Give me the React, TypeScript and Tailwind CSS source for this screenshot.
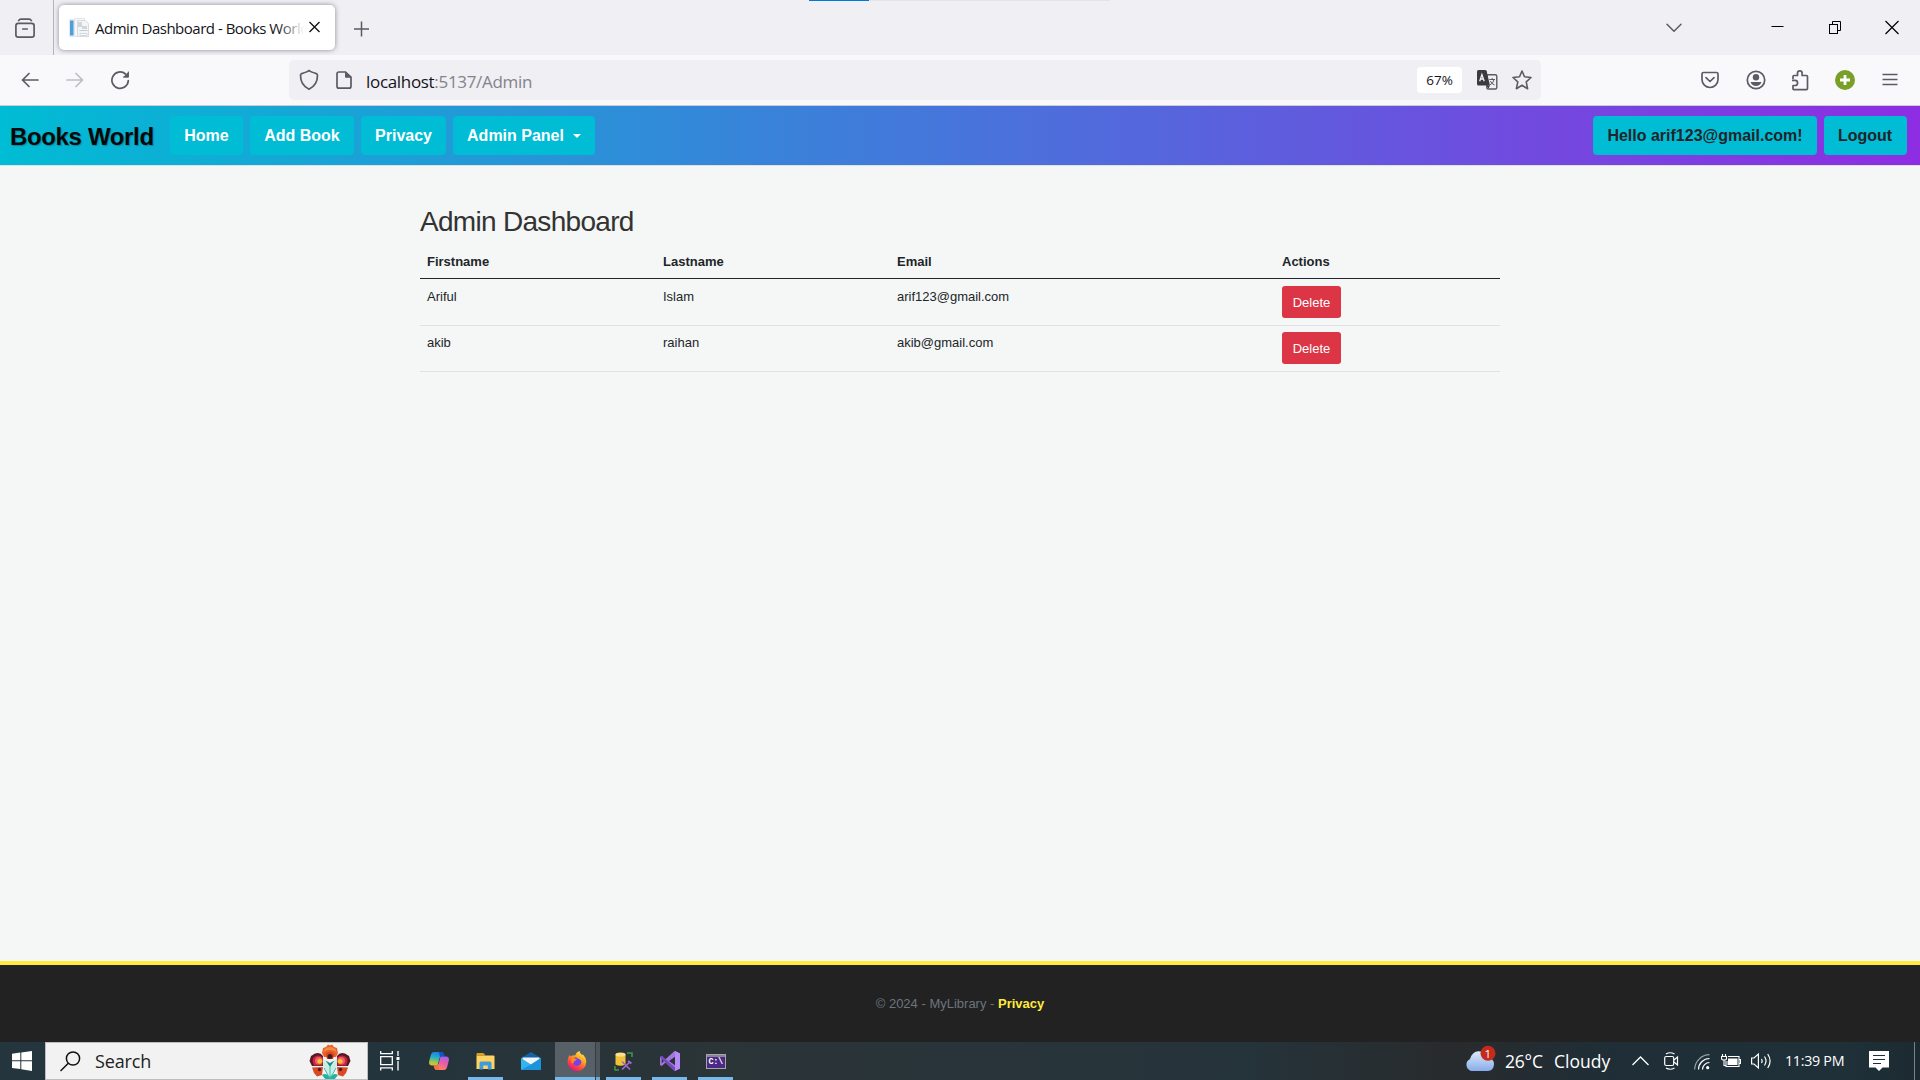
import React from "react";

const ink = "#5b5b66";

/* ---------- Browser chrome ---------- */

function TabBar() {
  return (
    <div className="relative flex h-[55px] bg-[#f0eff4]">
      <div className="absolute left-[809px] top-0 flex h-px w-[301px] bg-[#e4e4e4]">
        <div className="h-px w-[60px] bg-[#0078d7]" />
      </div>
      <div className="flex w-[54px] border-r border-[#b4b4ba]">
        <svg className="ml-[15px] mt-[18px]" width="20" height="21" fill="none" stroke={ink} strokeWidth="1.7" strokeLinecap="round">
          <path d="M3.6 2.6Q4.4 1.2 6 1.2H14Q15.6 1.2 16.4 2.6" />
          <rect x="0.9" y="5.4" width="18.2" height="13.7" rx="2.4" />
          <path d="M7.8 11H12.2" />
        </svg>
      </div>
      <div className="ml-[5px] mt-[5px] flex h-[45px] w-[276px] items-center rounded-[5px] bg-white shadow-[0_0_5px_rgba(70,70,85,0.6)]">
        <svg className="ml-[10px]" width="21" height="20">
          <rect x="1" y="2.500" width="3.500" height="15" fill="#4f9bd6" />
          <path d="M0 1h6v18H0" fill="#5ba5dc" opacity="0.200" />
          <path d="M5.500 0.500h10v18h-10z" fill="#f7f8f9" stroke="#e3e6e9" />
          <path d="M8.500 2.500h8l3 3v13h-11z" fill="#f3f5f6" stroke="#d8dce1" />
          <path d="M9 4h4v5h-4zM13 8h5v3h-5z" fill="#cfd6dc" />
          <path d="M10.500 12.500h8" stroke="#c4cbd2" />
          <path d="M11 15.500h7v2h-7z" fill="#fff" stroke="#d3d8dd" />
        </svg>
        <div className="relative ml-[5px] w-[209px] overflow-hidden whitespace-nowrap font-['Open_Sans','Noto_Sans',sans-serif] text-[15px] leading-[24px] tracking-[-0.490px] text-[#15141a]">
          Admin Dashboard - Books World
          <div className="absolute right-0 top-0 h-full w-[26px] bg-gradient-to-r from-transparent to-white" />
        </div>
        <svg className="ml-[5px] mb-px" width="11" height="12" stroke="#15141a" strokeWidth="1.4">
          <path d="M0.500 1L10.500 11M10.500 1L0.500 11" />
        </svg>
      </div>
      <svg className="ml-[19px] mt-[21px]" width="16" height="16" stroke={ink} strokeWidth="1.5">
        <path d="M7.500 0.500V15.500M0 8H15" />
      </svg>
      <div className="ml-auto flex">
        <svg className="mt-[22px]" width="18" height="12" fill="none" stroke={ink} strokeWidth="1.5" strokeLinecap="round" strokeLinejoin="round">
          <path d="M2 2.300L9 9.300L16 2.300" />
        </svg>
        <svg className="ml-[88px] mt-[20px]" width="13" height="14" stroke="#000">
          <path d="M0.500 6.500H12.500" />
        </svg>
        <svg className="ml-[45px] mt-[20px]" width="14" height="15" fill="none" stroke="#000">
          <rect x="0.500" y="4.500" width="8" height="9" />
          <path d="M3.500 4.500V1.500H11.500V10.500H8.500" />
        </svg>
        <svg className="ml-[42px] mr-[21px] mt-[20px]" width="14" height="15" stroke="#000" strokeWidth="1.200">
          <path d="M0.500 1L13.500 14M13.500 1L0.500 14" />
        </svg>
      </div>
    </div>
  );
}

function Toolbar() {
  return (
    <div className="flex h-[51px] items-start border-b border-[#ccccd2] bg-[#f9f9fb]">
      <svg className="ml-[21px] mt-[17px]" width="18" height="16" fill="none" stroke={ink} strokeWidth="1.700" strokeLinecap="round" strokeLinejoin="round">
        <path d="M17 8H1.500M8 1.500L1.500 8L8 14.500" />
      </svg>
      <svg className="ml-[27px] mt-[17px]" width="18" height="16" fill="none" stroke="#bdbdc3" strokeWidth="1.700" strokeLinecap="round" strokeLinejoin="round">
        <path d="M1 8H16.500M10 1.500L16.500 8L10 14.500" />
      </svg>
      <svg className="ml-[27px] mt-[15px]" width="19" height="20" fill="none" stroke={ink} strokeWidth="1.700" strokeLinecap="round">
        <path d="M17.300 10.500A8.200 8.200 0 1 1 14.500 4" />
        <path d="M17.800 1.600V7.400H12Z" fill={ink} stroke="none" />
        <path d="M17.300 2V6.900H12.600" strokeWidth="1" />
      </svg>
      <div className="ml-[159px] mt-[5px] flex h-[40px] w-[1252px] rounded-[5px] bg-[#f0eff4]">
        <svg className="ml-[10px] mt-[9px]" width="20" height="22" fill="none" stroke={ink} strokeWidth="1.700" strokeLinejoin="round">
          <path d="M10 1.500Q11 2.600 17.300 4.600Q18.500 5 18.500 6.200C18.500 13 15.500 17.500 10 20.200C4.500 17.500 1.500 13 1.500 6.200Q1.500 5 2.700 4.600Q9 2.600 10 1.500Z" />
        </svg>
        <svg className="ml-[17px] mt-[11px]" width="16" height="19" fill="none" stroke={ink} strokeWidth="1.700" strokeLinejoin="round">
          <path d="M9.500 1H3Q1 1 1 3V15.200Q1 17.200 3 17.200H13Q15 17.200 15 15.200V6.200Z" />
          <path d="M9.500 1V6.200H15Z" fill={ink} strokeWidth="1" />
        </svg>
        <div className="ml-[14px] mt-[10px] whitespace-nowrap font-['Open_Sans','Noto_Sans',sans-serif] text-[17px] leading-[24px] tracking-[-0.320px] text-[#15141a]">
          localhost<span className="text-[#84838b]">:5137/Admin</span>
        </div>
        <div className="ml-auto mt-[7px] flex h-[26px] w-[45px] items-center justify-center rounded-[4px] bg-white font-['Open_Sans','Noto_Sans',sans-serif] text-[13.500px] text-[#15141a]">
          67%
        </div>
        <svg className="ml-[15px] mt-[10px]" width="21" height="20">
          <rect x="9.800" y="4.800" width="10" height="14.200" rx="1.500" fill="#f0eff4" stroke={ink} strokeWidth="1.400" />
          <path d="M12.300 9.500H18M15.200 8V9.500M13 15Q16.500 13 17 9.700M13.300 11Q14.500 13.800 17.600 15" fill="none" stroke={ink} />
          <path d="M1.500 0H8Q9.300 0 9.700 1.300L13 15.500H1.500Q0 15.500 0 14V1.500Q0 0 1.500 0Z" fill="#3b3b40" />
          <path d="M2.700 11.300L4.900 4.500L7.200 11.300M3.500 9H6.500" fill="none" stroke="#f2f2f5" strokeWidth="1.300" />
          <path d="M9 15.500H13L11.500 18.500Z" fill="#3b3b40" />
        </svg>
        <svg className="ml-[14px] mr-[9px] mt-[10px]" width="20" height="20" fill="none" stroke={ink} strokeWidth="1.600" strokeLinejoin="round">
          <path d="M10 1L12.500 6.800L19 7.500L14.200 11.800L15.600 18.700L10 15.300L4.400 18.700L5.800 11.800L1 7.500L7.500 6.800Z" />
        </svg>
      </div>
      <div className="ml-auto flex h-[50px] items-center">
        <svg width="18" height="18" fill="none" stroke={ink} strokeWidth="1.700" strokeLinecap="round" strokeLinejoin="round">
          <path d="M2.500 1.500H15.500Q17 1.500 17 3V8.500A8 8 0 0 1 1 8.500V3Q1 1.500 2.500 1.500Z" />
          <path d="M5 6.700L9 10.500L13 6.700" />
        </svg>
        <svg className="ml-[27px]" width="20" height="20" fill="none" stroke={ink} strokeWidth="1.700">
          <circle cx="10" cy="10" r="8.700" />
          <circle cx="10" cy="7.300" r="3.200" fill={ink} stroke="none" />
          <path d="M4.500 12H15.500Q14 16 10 16T4.500 12Z" fill={ink} stroke="none" />
        </svg>
        <svg className="ml-[25px]" width="18" height="21" fill="none" stroke={ink} strokeWidth="1.700" strokeLinejoin="round">
          <path d="M2 9V6.500Q2 5.500 3 5.500H6.500V3.200A2.300 2.300 0 0 1 11.100 3.200V5.500H15.500Q16.500 5.500 16.500 6.500V18.500Q16.500 19.700 15.300 19.700H3Q2 19.700 2 18.700V15.500H4A2.500 2.500 0 0 0 4 10.300H1" />
        </svg>
        <svg className="ml-[26px]" width="20" height="20">
          <circle cx="10" cy="10" r="10" fill="#7a9f27" />
          <path d="M10 5V15M5 10H15" stroke="#fff" strokeWidth="2.800" />
        </svg>
        <svg className="ml-[27px] mr-[22px] mt-[-2px]" width="16" height="13" stroke={ink} strokeWidth="1.500">
          <path d="M0.500 1.500H15.500M0.500 6.500H15.500M0.500 11.500H15.500" />
        </svg>
      </div>
    </div>
  );
}

/* ---------- Web page ---------- */

function NavItem({ children, light, className }: { children: React.ReactNode; light?: boolean; className: string }) {
  return (
    <a
      className={
        "flex h-[39px] items-center justify-center whitespace-nowrap rounded-[4px] bg-[#00bcd4] text-[16px] font-bold leading-none " +
        (light ? "text-white " : "text-[#212529] ") +
        className
      }
    >
      {children}
    </a>
  );
}

function Navbar() {
  return (
    <nav className="flex h-[60px] items-center border-b border-[#dee2e6] bg-[linear-gradient(to_right,#00bcd4,#8e2de2)] pr-[13px]">
      <a className="ml-[10px] w-[160px] whitespace-nowrap pt-[2px] text-[24px] font-bold leading-none tracking-[-0.350px] text-[#05080a] [text-shadow:1px_1px_1px_rgba(0,0,0,0.25)]">
        Books World
      </a>
      <div className="flex gap-[7px]">
        <NavItem light className="w-[73px]">Home</NavItem>
        <NavItem light className="w-[104px]">Add Book</NavItem>
        <NavItem light className="w-[85px]">Privacy</NavItem>
        <NavItem light className="w-[142px]">
          Admin Panel
          <span className="ml-[9px] border-x-[4px] border-t-[4px] border-x-transparent border-t-white" />
        </NavItem>
      </div>
      <div className="ml-auto flex gap-[7px]">
        <NavItem className="w-[224px]">Hello arif123@gmail.com!</NavItem>
        <NavItem className="w-[83px] pr-px">Logout</NavItem>
      </div>
    </nav>
  );
}

const users = [
  { first: "Ariful", last: "Islam", email: "arif123@gmail.com" },
  { first: "akib", last: "raihan", email: "akib@gmail.com" },
];

function UserTable() {
  return (
    <main className="mx-auto w-[1080px] flex-1 pt-[39px] text-[#212529]">
      <h2 className="text-[28px] leading-[34px] tracking-[-0.700px] text-[#333]">Admin Dashboard</h2>
      <div className="mt-[4px] text-[13px]">
        <div className="grid h-[36px] grid-cols-[236px_234px_385px_1fr] border-b border-[#212529] pl-[7px] pt-[9px] font-bold leading-[20px]">
          <div>Firstname</div>
          <div>Lastname</div>
          <div>Email</div>
          <div>Actions</div>
        </div>
        {users.map((u, i) => (
          <div key={u.email} className={"grid grid-cols-[236px_234px_385px_1fr] border-b border-[#dee2e6] pl-[7px] leading-[20px] " + (i === 0 ? "h-[47px] pt-[8px]" : "h-[46px] pt-[7px]")}>
            <div>{u.first}</div>
            <div>{u.last}</div>
            <div>{u.email}</div>
            <button className="-mt-px h-[32px] w-[59px] rounded-[3px] bg-[#dc3545] pt-px text-[13px] text-white">Delete</button>
          </div>
        ))}
      </div>
    </main>
  );
}

function Footer() {
  return (
    <footer className="flex h-[81px] justify-center border-t-[4px] border-[#ffeb3b] bg-[#222] pt-[29px] text-[13px] leading-[20px] text-[#6c757d]">
      <p>
        © 2024 - MyLibrary - <a className="font-bold text-[#ffeb3b]">Privacy</a>
      </p>
    </footer>
  );
}

/* ---------- Taskbar ---------- */

function Flower() {
  return (
    <svg width="42" height="36" viewBox="0 0 42 36">
      <path d="M13 9L14 4L17 3L19 0.500L21 1.500L23 0.500L25 3L28 4L29 9L27 13H15Z" fill="#e8622a" />
      <path d="M14 9Q15 3 21 3T28 9Q26 6 21 6T14 9Z" fill="#f08a45" />
      <path d="M16.500 10Q21 5 25.500 10L24 15H18Z" fill="#d9481f" />
      <circle cx="21" cy="12.500" r="2.500" fill="#4a1a1c" />
      <path d="M14 12Q11 7.500 6 9.500L2 12L0.500 17L3 22H14Z" fill="#5a1624" />
      <path d="M28 12Q31 7.500 36 9.500L40 12L41.500 17L39 22H28Z" fill="#5a1624" />
      <path d="M14 13.500Q9 9.500 4.500 13.500Q2.500 17 5 21.500H13.500Z" fill="#c3283f" />
      <path d="M28 13.500Q33 9.500 37.500 13.500Q39.500 17 37 21.500H28.500Z" fill="#c3283f" />
      <circle cx="9.800" cy="16.800" r="3.800" fill="#f0606c" />
      <circle cx="32.200" cy="16.800" r="3.800" fill="#f0606c" />
      <circle cx="10.800" cy="17.300" r="2.400" fill="#f7c51e" />
      <circle cx="31.200" cy="17.300" r="2.400" fill="#f7c51e" />
      <path d="M21 24L14 14V22L21 34L28 22V14Z" fill="#c9ece4" />
      <path d="M21 23L16.500 16.500L21 19L25.500 16.500Z" fill="#0e9187" />
      <path d="M3 23.500L14 23L13 31L8 32.500L5 29Z" fill="#d94a24" />
      <path d="M39 23.500L28 23L29 31L34 32.500L37 29Z" fill="#d94a24" />
      <circle cx="10.500" cy="25.500" r="1.700" fill="#531a18" />
      <circle cx="31.500" cy="25.500" r="1.700" fill="#531a18" />
      <path d="M13 31Q17 28 21 33Q25 28 29 31L25 36H17Z" fill="#20b3a0" />
      <path d="M21 22V35M15 24L20 33M27 24L22 33" stroke="#3cbcae" strokeWidth="1" />
    </svg>
  );
}

function CopilotIcon() {
  return (
    <svg width="20" height="18" viewBox="0 0 20 18">
      <defs>
        <linearGradient id="cpa" x1="0.500" y1="0" x2="0.300" y2="1">
          <stop offset="0" stopColor="#1a7fe8" />
          <stop offset="0.450" stopColor="#2bb5c0" />
          <stop offset="0.750" stopColor="#9bcb4a" />
          <stop offset="1" stopColor="#f0b62d" />
        </linearGradient>
        <linearGradient id="cpb" x1="0.700" y1="0" x2="0.300" y2="1">
          <stop offset="0" stopColor="#a95cf0" />
          <stop offset="0.500" stopColor="#ee5f9c" />
          <stop offset="1" stopColor="#fb8a5a" />
        </linearGradient>
      </defs>
      <path d="M5 0H12Q14 0 14.700 2L15.500 4.500H13Q11 4.500 10.400 6.500L8.500 13.500H3Q-0.500 13.500 0.200 9.500Q1 5.500 2.200 2Q3 0 5 0Z" fill="url(#cpa)" />
      <path d="M15 18H8Q6 18 5.300 16L4.700 13.500H7Q9 13.500 9.600 11.500L11.500 4.500H17Q20.500 4.500 19.800 8.500Q19 12.500 17.800 16Q17 18 15 18Z" fill="url(#cpb)" />
      <path d="M10 0H12Q14 0 14.700 2L15.500 4.500H13Q11.500 4.500 11 5.500Z" fill="#1551c9" />
      <path d="M4.700 13.500H7Q8.500 13.500 9 12.500L10.500 18H8Q6 18 5.300 16Z" fill="#f2743c" />
    </svg>
  );
}

function FirefoxIcon() {
  return (
    <svg width="20" height="20" viewBox="0 0 20 20">
      <defs>
        <linearGradient id="ffa" x1="0.800" y1="0.050" x2="0.250" y2="0.950">
          <stop offset="0" stopColor="#fff04a" />
          <stop offset="0.400" stopColor="#ff9a1f" />
          <stop offset="0.750" stopColor="#ff3f46" />
          <stop offset="1" stopColor="#e31587" />
        </linearGradient>
      </defs>
      <path d="M2.500 4Q3 5 4 5.200Q6 3.800 8.200 4.500Q9 1 12.500 0Q12.800 2.500 15 4Q15.500 4.200 15.800 3.200Q19.500 7 19.300 11A9.400 9.200 0 0 1 0.500 10.800Q0.500 7 2.500 4Z" fill="url(#ffa)" />
      <circle cx="10" cy="10.500" r="4.400" fill="#7542e5" />
      <path d="M4 7.500Q7 6.500 9.800 8.200Q9.300 9.700 7.300 10Q7 12.500 4.800 12.500Z" fill="#ff8b20" />
      <path d="M8.500 6Q10.500 4.200 13.500 6Q15.500 8 15 11Q13.500 8 11 7.500Z" fill="#ffac2b" />
    </svg>
  );
}

function AppButton({ width, active, children }: { width: string; active?: boolean; children: React.ReactNode }) {
  return (
    <div className={"flex h-[38px] flex-col items-center " + width}>
      <div className="flex h-[35px] items-center justify-center pt-[3px]">{children}</div>
      {active && <div className="h-[3px] w-[35px] bg-[#76b9ed]" />}
    </div>
  );
}

function Taskbar() {
  return (
    <div className="flex h-[38px] items-start bg-[linear-gradient(to_right,#24353d_0,#24343c_400px,#2b3437_720px,#28343a_1000px,#25333a_1250px,#282b2d_1450px,#1f2e37_1620px,#1f3039_1850px,#1c2a30_1920px)] font-['Open_Sans','Noto_Sans',sans-serif] text-white">
      <svg className="ml-[12px] mt-[9px]" width="20" height="20" fill="#fff">
        <path d="M0 2.800L8.300 1.600V9.300H0ZM9.300 1.400L20 0V9.300H9.300ZM0 10.300H8.300V18L0 16.900ZM9.300 10.300H20V20L9.300 18.200Z" />
      </svg>
      <div className="ml-[13px] flex h-[38px] w-[323px] border border-[#bdbdbd] bg-[#f2f2f2]">
        <svg className="ml-[14px] mt-[8px]" width="21" height="21" fill="none" stroke="#111" strokeWidth="1.500">
          <circle cx="13" cy="7.500" r="6.600" />
          <path d="M8.300 12.200L0.500 20" />
        </svg>
        <div className="ml-[14px] mt-[6px] text-[18px] leading-[24px] tracking-[-0.150px] text-[#222]">Search</div>
        <div className="ml-auto mr-[16px] mt-px h-[35px] overflow-hidden">
          <Flower />
        </div>
      </div>
      <AppButton width="w-[44px]">
        <svg width="20" height="20" fill="none" stroke="#fff" strokeWidth="1.300">
          <path d="M0.700 0V2.700H12.300V0M0.700 19.500V16.800H12.300V19.500M0.700 5.700H12.300V13.700H0.700ZM18 0V5M18 10V19.500" />
          <path d="M16.500 6H19.500V9H16.500Z" fill="#fff" stroke="none" />
        </svg>
      </AppButton>
      <AppButton width="w-[54px]">
        <CopilotIcon />
      </AppButton>
      <AppButton width="w-[38px]" active>
        <svg width="19" height="17">
          <path d="M0.500 1Q0.500 0 1.500 0H7.500L9.500 2.500H0.500Z" fill="#e0a015" />
          <path d="M0.500 2.500H17.500Q18.500 2.500 18.500 3.500V16H0.500Z" fill="#ffd262" />
          <path d="M3.500 16.500V10Q3.500 8.500 5 8.500H14Q15.500 8.500 15.500 10V16.500H11.800V12.500H7.200V16.500Z" fill="#3f9be0" />
        </svg>
      </AppButton>
      <AppButton width="w-[51px]">
        <svg className="ml-[2px]" width="20" height="18">
          <path d="M10 0L20 6V17H0V6Z" fill="#1463a8" />
          <path d="M1.500 5.500H18.500V12L10 13L1.500 12Z" fill="#f2f6fa" />
          <path d="M0 6L10 12.500L20 6V17Q20 18 19 18H1Q0 18 0 17Z" fill="#35b3ee" />
          <path d="M0 18L10 12.500L20 6V17Q20 18 19 18Z" fill="#1c93dd" />
        </svg>
      </AppButton>
      <div className="flex h-[38px] w-[45px]">
        <div className="flex h-[38px] w-[40px] flex-col bg-[#566066]">
          <div className="flex h-[35px] items-center justify-center pl-[4px] pt-[3px]">
            <FirefoxIcon />
          </div>
          <div className="h-[3px] bg-[#76b9ed]" />
        </div>
        <div className="flex w-[5px] flex-col justify-end border-l border-[#343d41] bg-[#4d565a]">
          <div className="h-[3px] bg-[#6ba9d8]" />
        </div>
      </div>
      <AppButton width="ml-[6px] w-[35px]" active>
        <svg width="19" height="19">
          <path d="M1.500 2.500Q6 -0.500 11.500 2.500V12.500Q6 15 1.500 12.500Z" fill="#f0c23a" />
          <ellipse cx="6.500" cy="2.500" rx="5" ry="2" fill="#fbe08b" />
          <path d="M13 1H18V5M1 14V18H5" fill="none" stroke="#3f9a45" strokeWidth="1.500" />
          <path d="M8 9.500L16 17.500M16.500 9.500L8 17.500M14 9L17.500 11.500" fill="none" stroke="#a368c8" strokeWidth="1.700" />
        </svg>
      </AppButton>
      <AppButton width="ml-[11px] w-[35px]" active>
        <svg width="20" height="20">
          <path d="M14.500 0L20 2.500V17.500L14.500 20L5.500 11.500L1.800 15L0 14V6L1.800 5L5.500 8.300ZM15 5.700L9 10L15 14.300ZM1.700 7.500V12.500L4 10Z" fill="#a277e0" fillRule="evenodd" />
          <path d="M15 0L20 2.500V17.500L15 20Z" fill="#b58cf5" />
          <path d="M0 6L1.800 5L15 16.500V20L5.500 11.500Z" fill="#7648c0" />
        </svg>
      </AppButton>
      <AppButton width="ml-[11px] w-[35px]" active>
        <div className="flex h-[15px] w-[20px] flex-col border border-[#a9a3ae] bg-[#4b2a86]">
          <div className="h-[2px] bg-[#8c8496]" />
          <div className="pl-[2px] font-['Liberation_Mono',monospace] text-[8.500px] font-bold leading-[10px] tracking-[-0.300px]">C:\</div>
        </div>
      </AppButton>

      <div className="ml-auto flex h-[38px] items-start">
        <svg className="mt-[3px]" width="32" height="27">
          <defs>
            <linearGradient id="cloud" x1="0" y1="0" x2="0" y2="1">
              <stop offset="0" stopColor="#dfeafa" />
              <stop offset="1" stopColor="#86acea" />
            </linearGradient>
          </defs>
          <path d="M7 26A6.500 6.500 0 0 1 6 14Q9 5 16.500 6.500Q22 7.500 23.500 13Q30 13 30 19.500Q29.500 26 24 26Z" fill="url(#cloud)" />
          <circle cx="24" cy="8.300" r="7.500" fill="#c42b1c" />
          <text x="23.800" y="12.600" textAnchor="middle" fontSize="11.500" fontFamily="Open Sans, sans-serif" fill="#fff">1</text>
        </svg>
        <div className="ml-[9px] mt-[7px] w-[49px] whitespace-nowrap text-[17.500px] leading-[24px] tracking-[-0.200px]">26°C</div>
        <div className="mt-[7px] w-[78px] whitespace-nowrap text-[17.500px] leading-[24px]">Cloudy</div>
        <svg className="mt-[14px]" width="17" height="10" fill="none" stroke="#fff" strokeWidth="1.300">
          <path d="M0.500 9L8.500 1L16.500 9" />
        </svg>
        <svg className="ml-[15px] mt-[10px]" width="15" height="18" fill="none" stroke="#fff" strokeWidth="1.200">
          <rect x="0.700" y="4.500" width="9" height="9" rx="1.500" />
          <path d="M10 8L13.500 5V13L10 10M2 2Q6 -0.500 10.500 2M2 16Q6 18.500 10.500 16" />
        </svg>
        <svg className="ml-[15px] mt-[12px]" width="16" height="16" fill="none" stroke="#fff" strokeWidth="1.200">
          <path d="M0.700 15.500A15 15 0 0 1 15.500 0.700" opacity="0.550" />
          <path d="M4.500 15.500A11 11 0 0 1 15.500 4.500M8.500 15.500A7 7 0 0 1 15.500 8.500" />
          <circle cx="13.700" cy="13.700" r="1.600" fill="#fff" stroke="none" />
        </svg>
        <svg className="ml-[11px] mt-[11px]" width="20" height="16" fill="none" stroke="#fff" strokeWidth="1.100">
          <path d="M1.500 1V3.500M4.500 1V3.500M0.500 3.500H5.500V5.500Q5.500 7 3 7Q0.500 7 0.500 5.500ZM3 7V12.500H5M7 3.500H18V13.500H5V8M18 6.500H19.500V10.500H18" />
          <path d="M7 5.500H16.500V12H6.500V8H7Z" fill="#fff" stroke="none" />
        </svg>
        <svg className="ml-[10px] mt-[10px]" width="21" height="18" fill="none" stroke="#fff" strokeWidth="1.200">
          <path d="M0.600 6H3L7.400 2V16L3 12H0.600Z" />
          <path d="M10.500 7Q11.700 9 10.500 11M13.500 4.500Q16.500 9 13.500 13.500M16.700 2Q21.500 9 16.700 16" />
        </svg>
        <div className="ml-[13px] mt-[7px] w-[84px] whitespace-nowrap text-[14.300px] leading-[24px] tracking-[-0.300px]">11:39 PM</div>
        <svg className="mt-[9px]" width="20" height="21">
          <path d="M0 0H20V16.500H13.500L10 20L6.500 16.500H0Z" fill="#fff" />
          <path d="M4 4.500H16M4 8.500H16M4 12.500H12" stroke="#1f2e37" strokeWidth="1.200" />
        </svg>
        <div className="ml-[25px] mr-[5px] h-[38px] w-px bg-[#77838a]" />
      </div>
    </div>
  );
}

export default function App() {
  return (
    <div className="flex h-[1080px] w-[1920px] flex-col overflow-hidden bg-[#f5f7f6] font-['Liberation_Sans',Arial,sans-serif]">
      <TabBar />
      <Toolbar />
      <Navbar />
      <UserTable />
      <Footer />
      <Taskbar />
    </div>
  );
}
